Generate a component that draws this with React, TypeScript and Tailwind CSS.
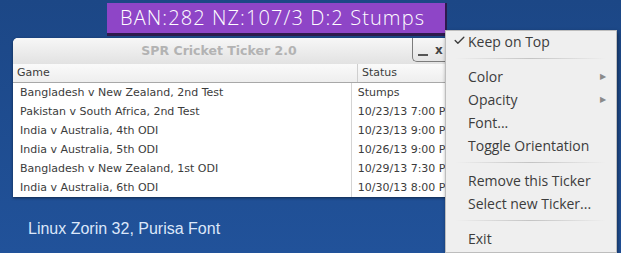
import { Check } from 'lucide-react'

const rows = [
  ['Bangladesh v New Zealand, 2nd Test', 'Stumps'],
  ['Pakistan v South Africa, 2nd Test', '10/23/13 7:00 PM'],
  ['India v Australia, 4th ODI', '10/23/13 9:00 PM'],
  ['India v Australia, 5th ODI', '10/26/13 9:00 PM'],
  ['Bangladesh v New Zealand, 1st ODI', '10/29/13 7:30 PM'],
  ['India v Australia, 6th ODI', '10/30/13 8:00 PM'],
]

const Separator = () => (
  <div className="pt-[4px] pb-[7px] px-[10px]">
    <div className="h-px bg-gradient-to-r from-[#efefef] via-[#c4c4c4] to-[#efefef]" />
  </div>
)

const MenuItem = ({ label, checked, submenu }: { label: string; checked?: boolean; submenu?: boolean }) => (
  <div className="relative flex items-center h-[23px] pl-[22px] pr-[10px] pb-[3px]">
    {checked && <Check className="absolute left-[7px] top-[3px] w-[13px] h-[13px] text-[#3c3c3c]" strokeWidth={2.5} />}
    <span className="flex-1">{label}</span>
    {submenu && <span className="text-[8px] text-[#8a8a8a]">▶</span>}
  </div>
)

export default function App() {
  return (
    <div className="relative w-[621px] h-[253px] overflow-hidden bg-gradient-to-b from-[#1c4786] to-[#21529a]">
      {/* ticker bar */}
      <div className="absolute left-[107px] top-[3px] w-[340px] h-[33px] bg-[#8e45c7] border-b-[3px] border-r-[2px] border-[#2d1a4d] flex items-center pl-[13px]">
        <span className="whitespace-nowrap text-white text-[20px] font-light tracking-[1.1px] leading-none" style={{ fontFamily: '"Open Sans", sans-serif' }}>
          BAN:282 NZ:107/3 D:2 Stumps
        </span>
      </div>

      {/* window */}
      <div className="absolute left-[13px] top-[38px] w-[442px] h-[159px] bg-white rounded-t-[5px] overflow-hidden shadow-[0_1px_3px_rgba(0,0,0,0.5)]" style={{ fontFamily: '"DejaVu Sans", sans-serif' }}>
        <div className="relative h-[26px] bg-gradient-to-b from-[#f7f7f7] to-[#e2e2e2] flex items-center justify-center pr-[30px]">
          <span className="text-[12.5px] font-bold text-[#b3b3b3]">SPR Cricket Ticker 2.0</span>
          <div className="absolute left-[399px] top-0 w-[21px] h-[24px] border-l border-b border-[#7c7c7c] rounded-bl-[5px] flex items-end justify-center pb-[5px]">
            <div className="w-[10px] h-[2px] bg-[#555]" />
          </div>
          <div className="absolute left-[420px] top-0 w-[22px] h-[24px] border-b border-[#7c7c7c] text-[12px] font-bold text-[#444] pl-[2px] pt-[3px]">x</div>
        </div>
        <div className="flex h-[19px] bg-gradient-to-b from-[#fafafa] to-[#eeeeee] border-b border-[#a8a8a8] text-[11px] text-[#3c3c3c] items-center">
          <div className="w-[345px] pl-[4px] h-full flex items-center border-r border-[#cfcfcf]">Game</div>
          <div className="pl-[4px]">Status</div>
        </div>
        <div className="flex">
          <div className="w-[345px] border-r border-[#d4d4d4]">
            {rows.map(([g]) => (
              <div key={g} className="h-[19px] flex items-center pl-[7px] pt-[1px] text-[11px] text-[#3c3c3c]">{g}</div>
            ))}
          </div>
          <div className="flex-1 whitespace-nowrap">
            {rows.map(([g, s]) => (
              <div key={g} className="h-[19px] flex items-center pl-[6px] pt-[1px] text-[11px] text-[#3c3c3c]">{s}</div>
            ))}
          </div>
        </div>
      </div>

      {/* context menu */}
      <div className="absolute left-[445px] top-[30px] w-[172px] h-[223px] bg-[#efefef] border border-[#bdbdbd] shadow-[1px_2px_4px_rgba(0,0,0,0.45)] text-[14px] text-[#3c3c3c]" style={{ fontFamily: '"Open Sans", sans-serif' }}>
        <MenuItem label="Keep on Top" checked />
        <Separator />
        <MenuItem label="Color" submenu />
        <MenuItem label="Opacity" submenu />
        <MenuItem label="Font..." />
        <MenuItem label="Toggle Orientation" />
        <Separator />
        <MenuItem label="Remove this Ticker" />
        <MenuItem label="Select new Ticker..." />
        <Separator />
        <MenuItem label="Exit" />
      </div>

      <div className="absolute left-[28px] top-[217px] text-[16px] text-[#dce7fa]" style={{ fontFamily: '"Liberation Sans", Arial, sans-serif' }}>
        Linux Zorin 32, Purisa Font
      </div>
    </div>
  )
}
